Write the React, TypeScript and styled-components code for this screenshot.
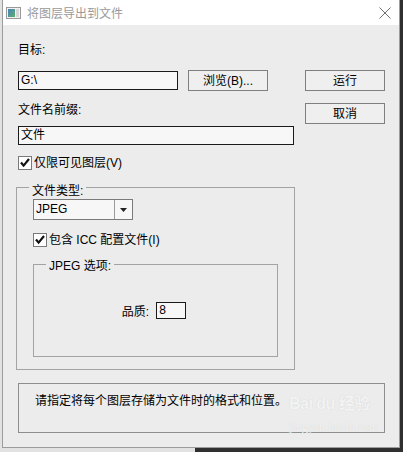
import styled, { createGlobalStyle } from "styled-components";

const GlobalStyle = createGlobalStyle`
  html, body {
    margin: 0;
    padding: 0;
  }
  body {
    width: 403px;
    height: 452px;
    overflow: hidden;
    background: linear-gradient(to right, #e2e2e2 195px, #2f2f2f 195px);
    font-family: "Liberation Sans", "Noto Sans CJK SC", sans-serif;
    font-size: 12px;
    color: #000;
  }
`;

const Window = styled.div`
  position: relative;
  margin-left: 2px;
  width: 398px;
  height: 448px;
  box-sizing: border-box;
  border: 1px solid #9c9c9c;
  border-top: none;
  background: #ececec;
  display: flex;
  flex-direction: column;
`;

const TitleBar = styled.div`
  height: 25px;
  background: #fff;
  display: flex;
  align-items: center;
  padding-left: 3px;
  padding-right: 8px;
`;

const Title = styled.span`
  margin-left: 6px;
  color: #9a9a9a;
  font-family: "Noto Sans CJK SC", sans-serif;
  font-size: 12px;
  line-height: 16px;
`;

const CloseBtn = styled.span`
  margin-left: auto;
  display: flex;
`;

const Body = styled.div`
  padding: 0 14px 0 15px;
`;

const Top = styled.div`
  display: grid;
  grid-template-columns: 276px 80px;
  column-gap: 11px;
`;

const Column = styled.div`
  display: flex;
  flex-direction: column;
`;

const Actions = styled.div`
  display: flex;
  flex-direction: column;
  gap: 12px;
  padding-top: 45px;
`;

const Label = styled.div<{ top: number }>`
  margin-top: ${(p) => p.top}px;
  line-height: 16px;
  height: 16px;
  white-space: nowrap;
`;

const Row = styled.div<{ top: number }>`
  margin-top: ${(p) => p.top}px;
  display: flex;
  align-items: center;
`;

const TextBox = styled.div<{ w: number; h: number }>`
  width: ${(p) => p.w}px;
  height: ${(p) => p.h}px;
  box-sizing: border-box;
  border: 1px solid #1a1a1a;
  background: #f7f7f7;
  padding-left: 2px;
  line-height: ${(p) => p.h - 2}px;
  white-space: nowrap;
`;

const Button = styled.div<{ gap?: number }>`
  width: 80px;
  height: 21px;
  box-sizing: border-box;
  margin-left: ${(p) => p.gap ?? 0}px;
  border: 1px solid #7f7f7f;
  background: #efefef;
  display: flex;
  align-items: center;
  justify-content: center;
  line-height: 16px;
`;

const Check = styled.label<{ top: number }>`
  margin-top: ${(p) => p.top}px;
  height: 16px;
  display: flex;
  align-items: center;
  gap: 2px;
  line-height: 16px;
  white-space: nowrap;
`;

const Group = styled.fieldset<{ top: number; w: number; pad: string }>`
  margin: ${(p) => p.top}px 0 0 0;
  width: ${(p) => p.w}px;
  box-sizing: border-box;
  min-width: 0;
  border: 1px solid #a3a3a3;
  padding: ${(p) => p.pad};
  display: flex;
  flex-direction: column;
  align-items: flex-start;
`;

const OuterGroup = styled(Group)`
  margin-left: -2px;
`;

const Legend = styled.legend<{ drop: number; shift: number }>`
  padding: ${(p) => p.drop}px 3px 0;
  margin-left: ${(p) => p.shift}px;
  line-height: 16px;
  white-space: nowrap;
`;

const Select = styled.div`
  width: 100px;
  height: 21px;
  box-sizing: border-box;
  border: 1px solid #7a7a7a;
  background: #f7f7f7;
  display: flex;
`;

const SelectValue = styled.span`
  flex: 1;
  padding-left: 2px;
  line-height: 19px;
`;

const SelectArrow = styled.span`
  width: 17px;
  border-left: 1px solid #9a9a9a;
  display: flex;
  align-items: center;
  justify-content: center;
`;

const Quality = styled.div`
  align-self: stretch;
  margin-top: 28px;
  display: flex;
  justify-content: center;
  align-items: center;
  gap: 7px;
  padding-right: 3px;
`;

const Info = styled.div`
  margin-top: 13px;
  width: 367px;
  height: 50px;
  box-sizing: border-box;
  border: 1px solid #8e8e8e;
  padding: 9px 0 0 16px;
  line-height: 16px;
  white-space: nowrap;
`;

const Watermark = styled.div`
  position: absolute;
  left: 286px;
  top: 390px;
  color: #f3f3f3;
  text-shadow: 0 0 1px #cfcfcf;
  display: flex;
  flex-direction: column;
  white-space: nowrap;
  pointer-events: none;
`;

const MarkLogo = styled.span`
  font-family: "Liberation Sans", "Noto Sans CJK SC", sans-serif;
  font-weight: bold;
  font-size: 16px;
  line-height: 28px;
  letter-spacing: -0.5px;
`;

const MarkUrl = styled.span`
  font-family: "Liberation Serif", serif;
  font-size: 12px;
  line-height: 14px;
  margin-top: 2px;
`;

const WindowIcon = () => (
  <svg width="15" height="12" viewBox="0 0 15 12">
    <defs>
      <linearGradient id="ic" x1="0" y1="0" x2="1" y2="1">
        <stop offset="0" stopColor="#4a82bd" />
        <stop offset="1" stopColor="#5aae6c" />
      </linearGradient>
    </defs>
    <rect x="0.5" y="0.5" width="14" height="11" fill="#f2f2f2" stroke="#9a9a9a" />
    <rect x="2" y="2" width="7" height="8" fill="url(#ic)" />
    <rect x="10" y="2" width="3" height="8" fill="#d6d6d6" />
  </svg>
);

const CloseIcon = () => (
  <svg width="12" height="12" viewBox="0 0 12 12">
    <path d="M0.5 0.5 L11.5 11.5 M11.5 0.5 L0.5 11.5" stroke="#707070" strokeWidth="1" />
  </svg>
);

const CheckBox = () => (
  <svg width="14" height="14" viewBox="0 0 14 14">
    <rect x="0.5" y="0.5" width="13" height="13" fill="#fff" stroke="#7a7a7a" />
    <path d="M3 6.5 L5.6 9.6 L11 3" fill="none" stroke="#111" strokeWidth="2.2" />
  </svg>
);

const Arrow = () => (
  <svg width="7" height="4" viewBox="0 0 7 4">
    <path d="M0 0 H7 L3.5 4 Z" fill="#222" />
  </svg>
);

export default function App() {
  return (
    <>
      <GlobalStyle />
      <Window>
        <TitleBar>
          <WindowIcon />
          <Title>将图层导出到文件</Title>
          <CloseBtn>
            <CloseIcon />
          </CloseBtn>
        </TitleBar>
        <Body>
          <Top>
            <Column>
              <Label top={17}>目标:</Label>
              <Row top={12}>
                <TextBox w={160} h={19}>G:\</TextBox>
                <Button gap={10}>浏览(B)...</Button>
              </Row>
              <Label top={11}>文件名前缀:</Label>
              <Row top={8}>
                <TextBox w={276} h={19}>文件</TextBox>
              </Row>
              <Check top={10}>
                <CheckBox />
                仅限可见图层(V)
              </Check>
              <OuterGroup top={5} w={279} pad="0 0 12px 16px">
                <Legend drop={7} shift={-4}>文件类型:</Legend>
                <Select>
                  <SelectValue>JPEG</SelectValue>
                  <SelectArrow>
                    <Arrow />
                  </SelectArrow>
                </Select>
                <Check top={12}>
                  <CheckBox />
                  包含 ICC 配置文件(I)
                </Check>
                <Group top={7} w={245} pad="0 0 37px 0">
                  <Legend drop={3} shift={12}>JPEG 选项:</Legend>
                  <Quality>
                    品质:
                    <TextBox w={30} h={17}>8</TextBox>
                  </Quality>
                </Group>
              </OuterGroup>
            </Column>
            <Actions>
              <Button>运行</Button>
              <Button>取消</Button>
            </Actions>
          </Top>
          <Info>请指定将每个图层存储为文件时的格式和位置。</Info>
        </Body>
        <Watermark>
          <MarkLogo>Bai du 经验</MarkLogo>
          <MarkUrl>jingyan.baidu.com</MarkUrl>
        </Watermark>
      </Window>
    </>
  );
}
